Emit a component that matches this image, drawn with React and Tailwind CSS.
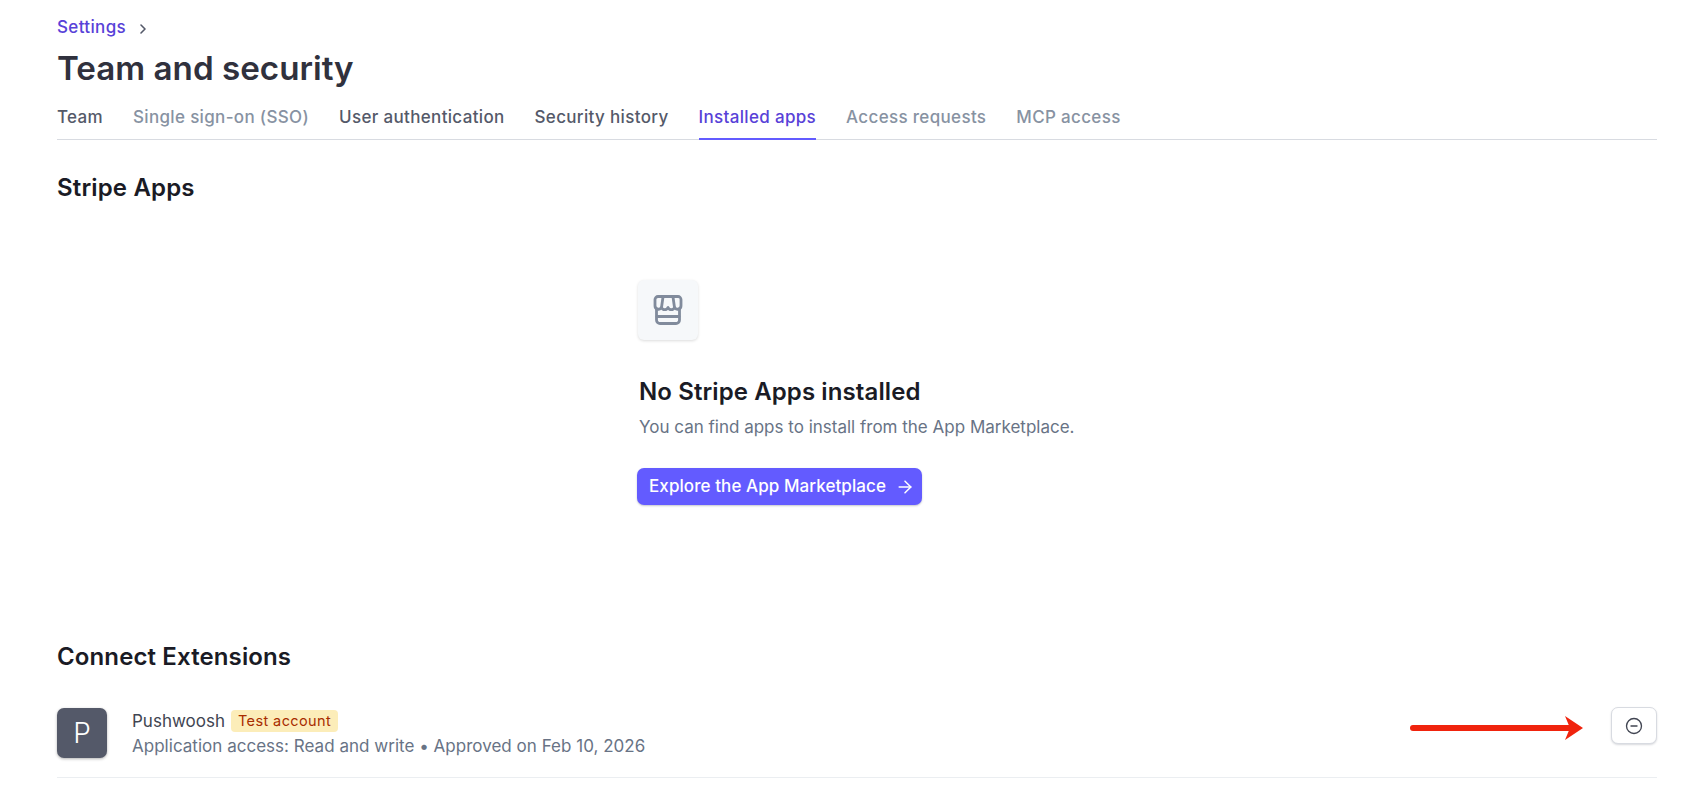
import React from 'react'
import { ChevronRight, ArrowRight, CircleMinus } from 'lucide-react'

const tabs = [
  { label: 'Team', cls: 'text-[#545969]' },
  { label: 'Single sign-on (SSO)', cls: 'text-[#8792a2]' },
  { label: 'User authentication', cls: 'text-[#545969]' },
  { label: 'Security history', cls: 'text-[#545969]' },
  { label: 'Installed apps', cls: 'text-[#5841d8] border-b-2 border-[#635bff]' },
  { label: 'Access requests', cls: 'text-[#8792a2]' },
  { label: 'MCP access', cls: 'text-[#8792a2]' },
]

function StoreIcon() {
  return (
    <svg width="30" height="30" viewBox="0 0 30 30" fill="none" stroke="#818b9c" strokeWidth="2.8" strokeLinejoin="round" strokeLinecap="round">
      <path d="M5 1.500h20a3 3 0 0 1 3 3v6a3.500 3.500 0 0 1-6.500 2 3.500 3.500 0 0 1-6.500 0 3.500 3.500 0 0 1-6.500 0A3.500 3.500 0 0 1 2 10.500v-6a3 3 0 0 1 3-3z" />
      <path d="M10 2 8.500 12.500M20 2l1.500 10.500" />
      <path d="M3.500 14v11a3.500 3.500 0 0 0 3.500 3.500h16a3.500 3.500 0 0 0 3.500-3.500V14" />
      <path d="M4 21.500h22" />
    </svg>
  )
}

export default function App() {
  return (
    <div className="relative h-[804px] overflow-hidden bg-white pl-[57px] pr-[41px] font-['Inter',sans-serif]">
      {/* Header */}
      <div className="flex h-[54px] items-end gap-[9px] pb-[17px]">
        <span className="text-[17px] font-medium leading-[20px] tracking-[0.35px] text-[#5841d8]">Settings</span>
        <ChevronRight className="h-4 w-4 text-[#545969]" strokeWidth={2.4} />
      </div>
      <h1 className="text-[33.200px] font-semibold leading-[28px] text-[#30313d]">Team and security</h1>

      {/* Tabs */}
      <div className="mt-[22px] flex h-[36px] gap-[30px] border-b border-[#d8dbe1]">
        {tabs.map((t) => (
          <div key={t.label} className={`h-[36px] pt-[1px] text-[17px] font-medium leading-[24px] tracking-[0.33px] ${t.cls}`}>
            {t.label}
          </div>
        ))}
      </div>

      <h2 className="mt-[34px] text-[24px] font-semibold leading-[28px] tracking-[0.15px] text-[#1a1b25]">Stripe Apps</h2>

      {/* Empty state */}
      <div className="ml-[580px] mt-[78px] flex flex-col items-start">
        <div className="ml-[1px] flex h-[60px] w-[60px] items-center justify-center rounded-[6px] bg-[#f6f8fa] shadow-[0_1px_3px_rgba(0,0,0,0.14)]">
          <StoreIcon />
        </div>
        <h3 className="ml-[2px] mt-[37px] text-[24px] font-semibold leading-[30px] tracking-[0.1px] text-[#1a1b25]">No Stripe Apps installed</h3>
        <p className="ml-[2px] mt-[8px] text-[17px] leading-[24px] text-[#687385]">You can find apps to install from the App Marketplace.</p>
        <button className="mt-[29px] flex h-[37px] w-[285px] items-center gap-[9px] rounded-[7px] bg-[#635bff] pl-[12px] text-[17px] font-medium tracking-[0.08px] text-white shadow-[0_1px_2px_rgba(60,66,87,0.3)]">
          Explore the App Marketplace
          <ArrowRight className="h-[20px] w-[20px]" strokeWidth={1.8} />
        </button>
      </div>

      <h2 className="mt-[138px] text-[24px] font-semibold leading-[28px] tracking-[0.12px] text-[#1a1b25]">Connect Extensions</h2>

      {/* Extension row */}
      <div className="mt-[37px] flex h-[70px] items-start justify-between border-b border-[#ebeef1]">
        <div className="flex gap-[25px]">
          <div className="flex h-[50px] w-[50px] items-center justify-center rounded-[7px] bg-[#545969] text-[28px] font-light text-white shadow-[0_1px_3px_rgba(0,0,0,0.3)]">P</div>
          <div className="pt-[1px]">
            <div className="flex h-[24px] items-center gap-[6px]">
              <span className="text-[17px] leading-[24px] text-[#414552]">Pushwoosh</span>
              <span className="rounded-[4px] bg-[#fcedb9] px-[7px] text-[14.500px] leading-[22px] tracking-[0.4px] text-[#a82c00]">Test account</span>
            </div>
            <div className="mt-[1px] text-[17px] leading-[24px] tracking-[0.02px] text-[#687385]">Application access: Read and write • Approved on Feb 10, 2026</div>
          </div>
        </div>
        <button className="-mt-[1px] flex h-[37px] w-[46px] items-center justify-center rounded-[7px] border border-[#d8dbe1] bg-white shadow-[0_1px_2px_rgba(60,66,87,0.2)]">
          <CircleMinus className="h-[18px] w-[18px] text-[#414552]" strokeWidth={1.8} />
        </button>
      </div>

      {/* Red annotation arrow */}
      <svg className="absolute left-[1408px] top-[715px]" width="178" height="26" viewBox="0 0 178 26">
        <path d="M5 13H165" stroke="#f0230d" strokeWidth="6" strokeLinecap="round" />
        <path d="M157 1 175 13 157 25 162 13z" fill="#f0230d" />
      </svg>
    </div>
  )
}
